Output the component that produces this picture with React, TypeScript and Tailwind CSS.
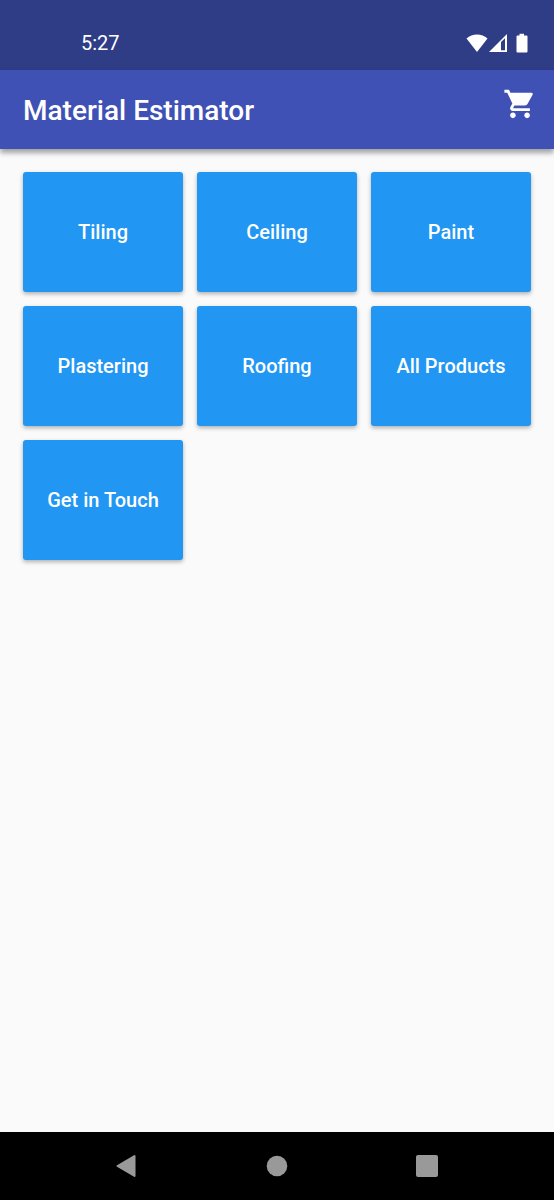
import { MdShoppingCart } from "react-icons/md";

const categories = [
  "Tiling",
  "Ceiling",
  "Paint",
  "Plastering",
  "Roofing",
  "All Products",
  "Get in Touch",
];

function StatusBar() {
  return (
    <div className="flex h-[70px] items-end justify-between bg-[#2f3c86] pr-[26px] pb-[17px] pl-[81px] text-white">
      <span className="text-xl leading-5">5:27</span>
      <div className="flex items-center">
        {/* Wifi */}
        <svg viewBox="0 0 22 18" className="h-[18px] w-[22px]" fill="currentColor">
          <path d="M11 18 .5 4.600C3.500 1.800 7 .5 11 .5s7.500 1.300 10.500 4.100z" />
        </svg>
        {/* Signal */}
        <svg viewBox="0 0 18 18" className="ml-px h-[18px] w-[18px]" fill="currentColor">
          <path d="M0 18 18 0v18zM12 8V16.300h4V4.300z" fillRule="evenodd" />
        </svg>
        {/* Battery */}
        <svg viewBox="0 0 12 20" className="ml-[9px] h-5 w-3" fill="currentColor">
          <path d="M3.500.8h4.500v1.700h2.500q1 0 1 1v15q0 1-1 1h-9q-1 0-1-1v-15q0-1 1-1h2z" />
        </svg>
      </div>
    </div>
  );
}

export default function App() {
  return (
    <div className="flex min-h-screen flex-col bg-[#fafafa] font-['Roboto',sans-serif]">
      <StatusBar />

      {/* App Bar */}
      <header className="flex h-[79px] items-center justify-between bg-[#3f51b5] pr-[17px] pl-[23px] text-white shadow-[0_4px_5px_rgba(0,0,0,0.35)]">
        <h1 className="pt-0.5 text-[28px] font-medium">Material Estimator</h1>
        <button aria-label="Cart" className="mb-3">
          <MdShoppingCart size={34} />
        </button>
      </header>

      {/* Category Grid */}
      <main className="grid flex-1 grid-cols-3 content-start gap-3.5 px-[23px] pt-[23px]">
        {categories.map((name) => (
          <button
            key={name}
            className="h-[120px] rounded-[3px] bg-[#2196f3] text-xl font-medium text-white shadow-[0_2px_4px_rgba(0,0,0,0.3)]"
          >
            {name}
          </button>
        ))}
      </main>

      {/* Navigation Bar */}
      <nav className="flex h-[68px] items-center justify-center gap-32 bg-black text-[#999999]">
        <button aria-label="Back">
          <svg viewBox="0 0 22 24" className="h-6 w-[22px]" fill="currentColor">
            <path
              d="M1.500 12 18.500 2v20z"
              stroke="currentColor"
              strokeWidth="2"
              strokeLinejoin="round"
            />
          </svg>
        </button>
        <button aria-label="Home">
          <svg viewBox="0 0 22 22" className="h-[22px] w-[22px]" fill="currentColor">
            <circle cx="11" cy="11" r="10.300" />
          </svg>
        </button>
        <button aria-label="Recents">
          <svg viewBox="0 0 22 22" className="h-[22px] w-[22px]" fill="currentColor">
            <rect width="22" height="22" rx="2" />
          </svg>
        </button>
      </nav>
    </div>
  );
}
